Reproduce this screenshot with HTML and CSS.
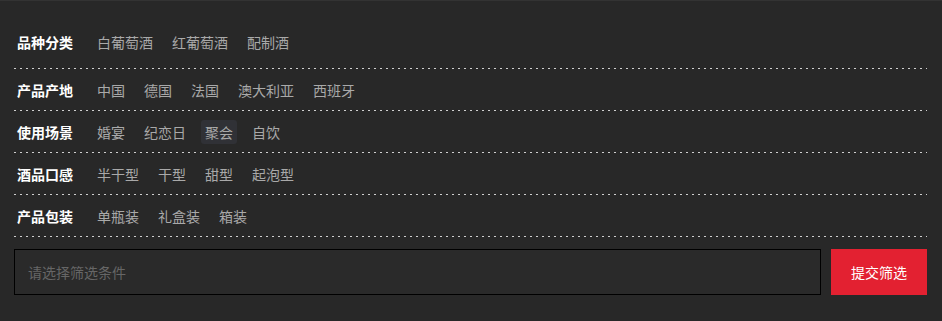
FILE: index.html
```html
<!DOCTYPE html>
<html lang="zh-CN">
<head>
    <meta charset="UTF-8">
    <meta name="viewport" content="width=device-width, initial-scale=1.0">
    <title>葡萄酒筛选</title>
    <link rel="stylesheet" href="styles.css">
</head>
<body>
    <div class="filter">
        <div class="filter-row first">
            <span class="filter-label">品种分类</span>
            <ul class="filter-items">
                <li>白葡萄酒</li>
                <li>红葡萄酒</li>
                <li>配制酒</li>
            </ul>
        </div>
        <div class="filter-row">
            <span class="filter-label">产品产地</span>
            <ul class="filter-items">
                <li>中国</li>
                <li>德国</li>
                <li>法国</li>
                <li>澳大利亚</li>
                <li>西班牙</li>
            </ul>
        </div>
        <div class="filter-row">
            <span class="filter-label">使用场景</span>
            <ul class="filter-items">
                <li>婚宴</li>
                <li>纪恋日</li>
                <li class="hover">聚会</li>
                <li>自饮</li>
            </ul>
        </div>
        <div class="filter-row">
            <span class="filter-label">酒品口感</span>
            <ul class="filter-items">
                <li>半干型</li>
                <li>干型</li>
                <li>甜型</li>
                <li>起泡型</li>
            </ul>
        </div>
        <div class="filter-row">
            <span class="filter-label">产品包装</span>
            <ul class="filter-items">
                <li>单瓶装</li>
                <li>礼盒装</li>
                <li>箱装</li>
            </ul>
        </div>

        <form class="filter-submit" onsubmit="return false;">
            <input type="text" placeholder="请选择筛选条件">
            <button type="submit">提交筛选</button>
        </form>
    </div>
</body>
</html>
```

FILE: styles.css
```css
* {
    margin: 0;
    padding: 0;
    box-sizing: border-box;
    font-family: 'Noto Sans CJK SC', 'Microsoft YaHei', sans-serif;
}

body {
    background: #282828;
    border-top: 1px solid #333;
    font-size: 14px;
}

.filter {
    padding: 20px 15px 0 14px;
}

.filter-row {
    display: flex;
    align-items: center;
    padding: 9px 0 8px;
    background: linear-gradient(to right, #d0d0d0 2px, transparent 2px) left bottom / 6px 1px repeat-x;
    padding-bottom: 9px;
}

.filter-row.first {
    padding-bottom: 15px;
}

.filter-label {
    width: 79px;
    padding-left: 3px;
    color: #fff;
    font-weight: bold;
    line-height: 24px;
}

.filter-items {
    display: flex;
    list-style: none;
}

.filter-items li {
    padding: 0 4px;
    margin-right: 11px;
    line-height: 24px;
    color: #a9a9a9;
    border-radius: 3px;
    cursor: pointer;
}

.filter-items li.hover,
.filter-items li:hover {
    background: #303136;
}

/* Bottom input + button */
.filter-submit {
    display: flex;
    gap: 10px;
    margin-top: 12px;
}

.filter-submit input {
    flex: 1;
    height: 46px;
    padding: 0 13px;
    background: #2a2a2a;
    border: 1px solid #000;
    outline: none;
    color: #ccc;
    font-size: 14px;
}

.filter-submit input::placeholder {
    color: #666;
}

.filter-submit button {
    width: 96px;
    height: 46px;
    background: #e32131;
    color: #fff;
    border: none;
    font-size: 14px;
    cursor: pointer;
}
```
